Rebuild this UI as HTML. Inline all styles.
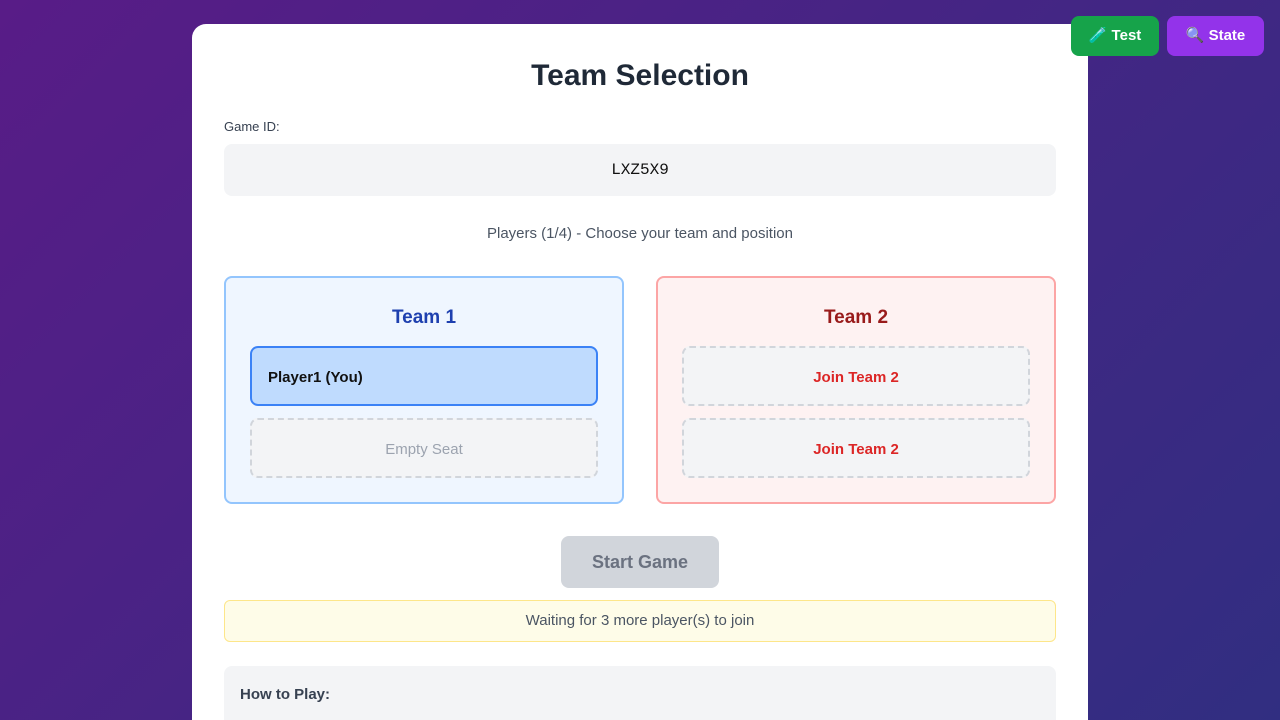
<!DOCTYPE html>
<html><head><style>
*{box-sizing:border-box;margin:0;padding:0}
html,body{width:1280px;height:720px;overflow:hidden}
body{background:linear-gradient(135deg,#581c87,#312e81);font-family:"Liberation Sans",sans-serif;position:relative}
.card{position:absolute;left:192px;top:24px;width:896px;height:696px;overflow:hidden;background:#fff;border-radius:14px 14px 0 0;padding:0 32px}
h1{text-align:center;font-size:30px;color:#1f2937;margin-top:34px;line-height:36px}
.lbl{font-size:13px;color:#374151;margin-top:25px}
.gid{margin-top:10px;height:52px;background:#f3f4f6;border-radius:8px;text-align:center;line-height:52px;font-family:"Liberation Mono",monospace;font-size:16px;color:#111}
.pl{text-align:center;color:#4b5563;font-size:15px;margin-top:29px}
.teams{display:flex;gap:32px;margin-top:34px}
.team{flex:1;height:228px;border:2px solid;border-radius:8px;padding:0 24px}
.team h2{text-align:center;font-size:19px;line-height:24px;margin:28px 0 16px}
.slot{height:60px;border-radius:8px;margin-bottom:12px;line-height:59px;font-size:15px}
.btn{display:block;margin:32px auto 0;width:158px;height:52px;border-radius:8px;background:#d1d5db;color:#6b7280;font-weight:bold;font-size:18px;text-align:center;line-height:52px}
.wait{margin-top:12px;height:42px;border:1px solid #fde68a;background:#fefce8;border-radius:6px;text-align:center;line-height:40px;color:#4b5563;font-size:15px}
.how{margin-top:24px;height:54px;background:#f3f4f6;border-radius:8px 8px 0 0;padding:20px 16px 0;font-weight:bold;color:#374151;font-size:15px}
.tb{position:absolute;top:16px;height:40px;border-radius:8px;color:#fff;font-weight:bold;font-size:15px;line-height:40px;text-align:center}
</style></head><body>
<div class="card">
<h1>Team Selection</h1>
<div class="lbl">Game ID:</div>
<div class="gid">LXZ5X9</div>
<div class="pl">Players (1/4) - Choose your team and position</div>
<div class="teams">
<div class="team" style="border-color:#93c5fd;background:#eff6ff">
<h2 style="color:#1e40af">Team 1</h2>
<div class="slot" style="background:#bfdbfe;border:2px solid #3b82f6;padding-left:16px;font-weight:bold;color:#111">Player1 (You)</div>
<div class="slot" style="background:#f3f4f6;border:2px dashed #d1d5db;text-align:center;color:#9ca3af">Empty Seat</div>
</div>
<div class="team" style="border-color:#fca5a5;background:#fef2f2">
<h2 style="color:#991b1b">Team 2</h2>
<div class="slot" style="background:#f3f4f6;border:2px dashed #d1d5db;text-align:center;color:#dc2626;font-weight:bold">Join Team 2</div>
<div class="slot" style="background:#f3f4f6;border:2px dashed #d1d5db;text-align:center;color:#dc2626;font-weight:bold">Join Team 2</div>
</div>
</div>
<div class="btn">Start Game</div>
<div class="wait">Waiting for 3 more player(s) to join</div>
<div class="how">How to Play:</div>
</div>
<div class="tb" style="left:1071px;width:88px;background:#16a34a">🧪 Test</div>
<div class="tb" style="left:1167px;width:97px;background:#9333ea">🔍 State</div>
</body></html>
